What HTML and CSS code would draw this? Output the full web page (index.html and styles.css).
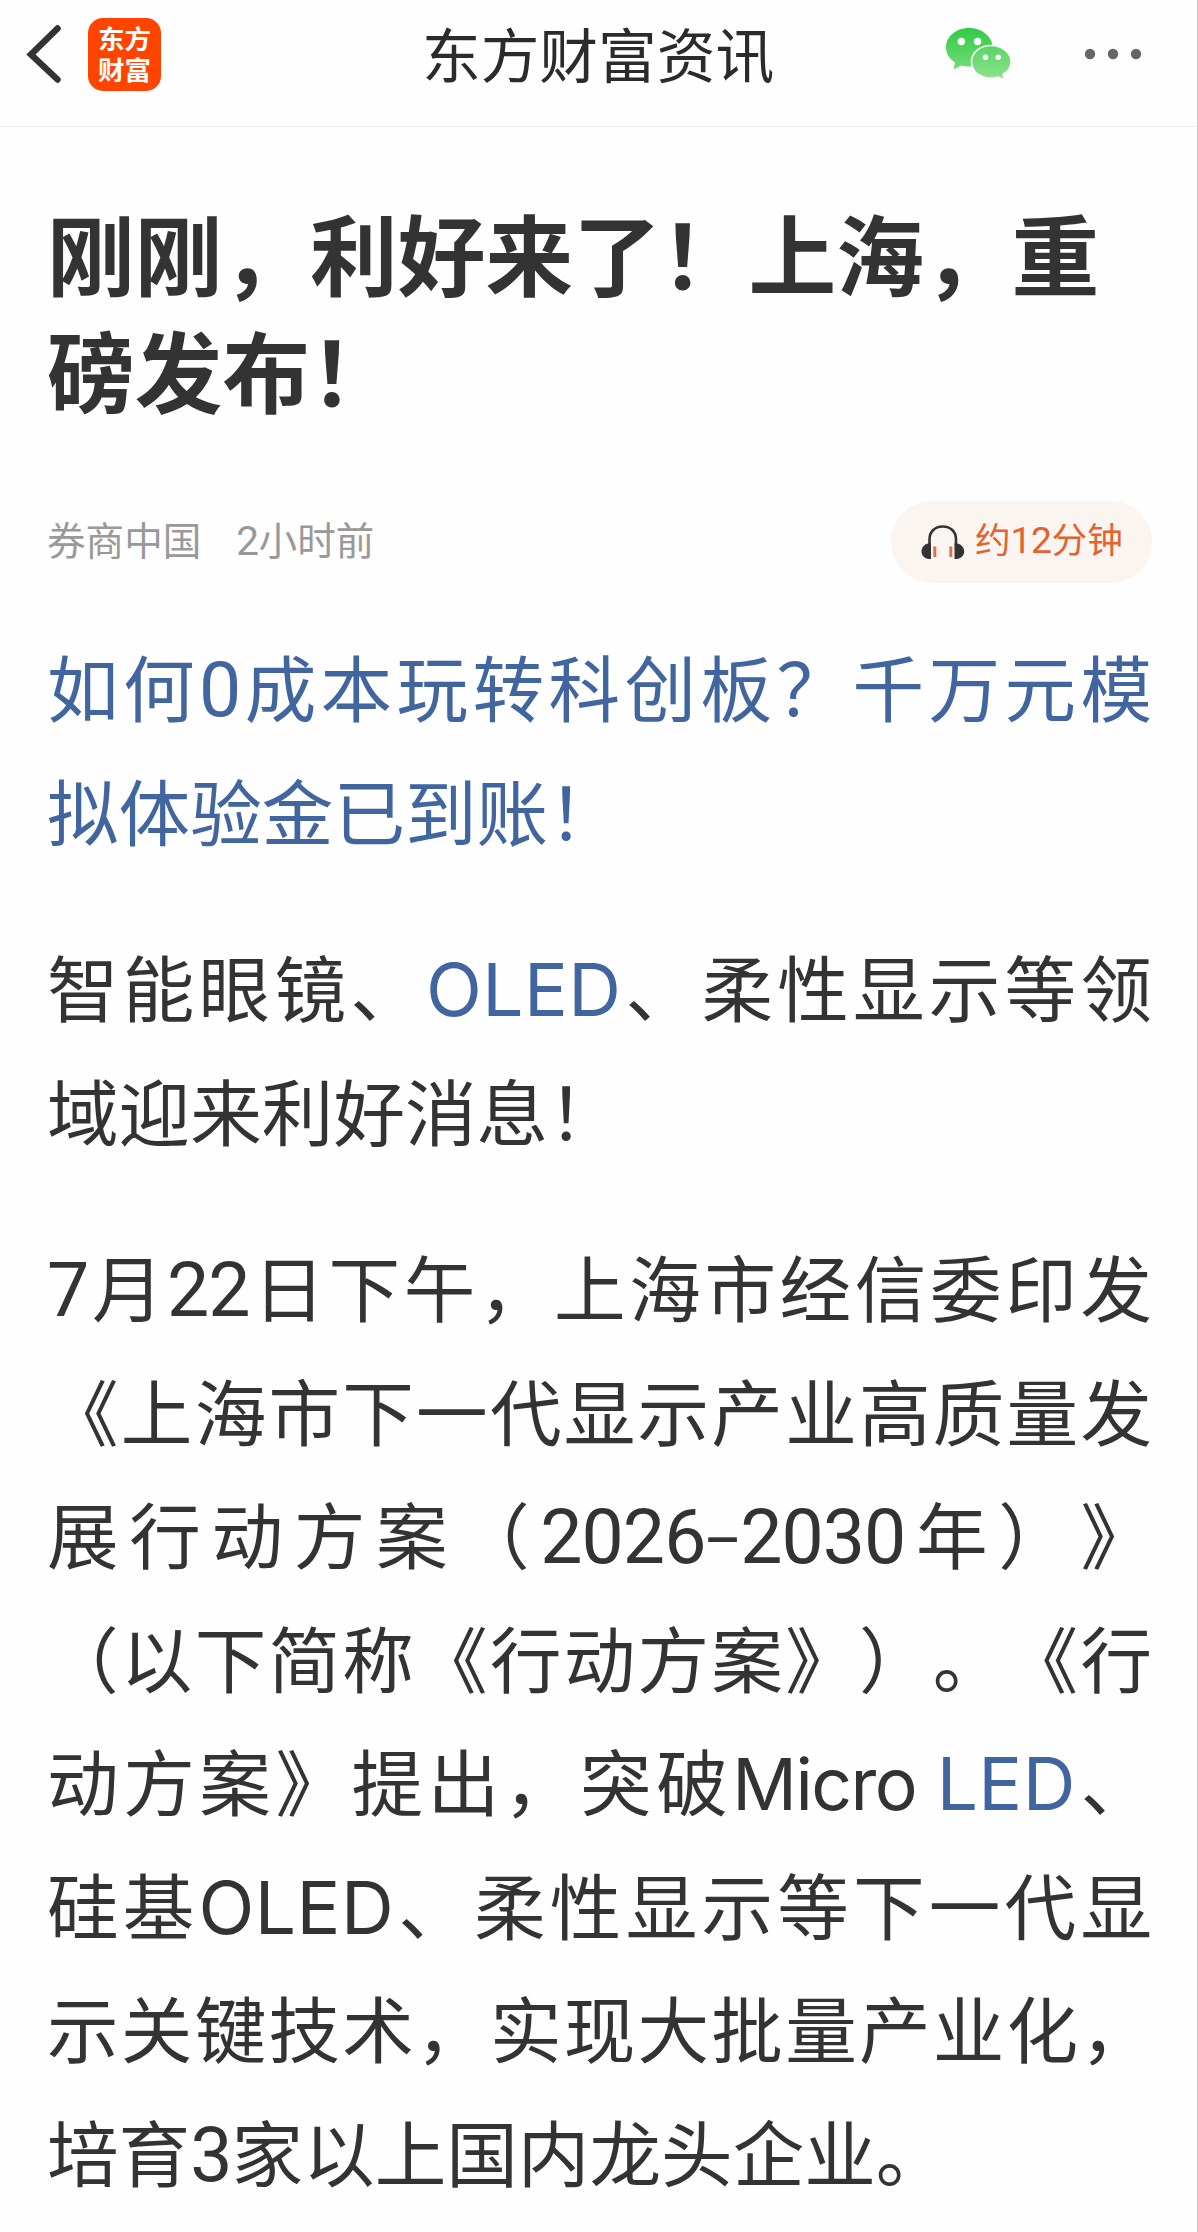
FILE: index.html
```html
<!DOCTYPE html>
<html lang="zh-CN">
<head>
<meta charset="utf-8">
<title>东方财富资讯</title>
<link rel="stylesheet" href="styles.css">
</head>
<body>
<div class="page">
  <header class="topbar">
    <div class="side">
      <svg class="back" width="36" height="60" viewBox="0 0 36 60"><path d="M31.500 3.500L5 29.500L31.500 54.500" fill="none" stroke="#333" stroke-width="6.500" stroke-linecap="round" stroke-linejoin="miter"/></svg>
      <div class="logo">东方<br>财富</div>
    </div>
    <div class="name">东方财富资讯</div>
    <div class="side side-end">
      <svg class="wechat" width="68" height="54" viewBox="0 0 68 54">
        <defs>
          <linearGradient id="g1" x1="0" y1="0" x2="0" y2="1"><stop offset="0" stop-color="#30cb45"/><stop offset="1" stop-color="#72dd78"/></linearGradient>
          <linearGradient id="g2" x1="0" y1="0" x2="0" y2="1"><stop offset="0" stop-color="#5bd466"/><stop offset="1" stop-color="#8be48e"/></linearGradient>
        </defs>
        <path d="M24 1C11 1 1 9.500 1 20.500C1 27 4.500 32 10 35.500L8.500 42.500L16.500 38.500C19 39.300 21.500 39.500 24 39.500C37 39.500 47.500 31 47.500 20.500C47.500 9.500 37 1 24 1Z" fill="url(#g1)"/>
        <path d="M46 18.500C35 18.500 26.500 25.500 26.500 35C26.500 44.500 35 51 46 51C48.500 51 51 50.700 53 50L59.500 53L58 47.500C63 44.500 66 40 66 35C66 25.500 57 18.500 46 18.500Z" fill="url(#g2)" stroke="#fefefe" stroke-width="1.600"/>
        <g fill="#fefefe"><circle cx="16.300" cy="14.500" r="3.700"/><circle cx="32.600" cy="14.500" r="3.700"/><circle cx="40.500" cy="30.300" r="2.700"/><circle cx="53.200" cy="30.300" r="2.700"/></g>
      </svg>
      <svg class="more" width="58" height="12" viewBox="0 0 58 12" fill="#666"><circle cx="6" cy="6" r="5.200"/><circle cx="29" cy="6" r="5.200"/><circle cx="52" cy="6" r="5.200"/></svg>
    </div>
  </header>
  <article class="article">
    <h1 class="headline">刚刚，利好来了！上海，重<br>磅发布！</h1>
    <div class="meta">
      <div class="source"><span>券商中国</span><span><b class="num">2</b>小时前</span></div>
      <div class="listen">
        <svg width="44" height="36" viewBox="0 0 44 36">
          <path d="M8.500 22V15.500C8.500 7.500 14 2.500 21.700 2.500C29.500 2.500 35 7.500 35 15.500V22" fill="none" stroke="#333" stroke-width="2.600"/>
          <path d="M10 19.500V35H8C3.500 34.500 .5 31.500 .5 27.500C.5 23.500 3 20.500 7 19.500ZM33.500 19.500V35H35.500C40 34.500 43.200 31.500 43.200 27.500C43.200 23.500 40.500 20.500 36.500 19.500Z" fill="#333"/>
          <path d="M13.800 22.500V33M29.800 22.500V33" stroke="#e3703f" stroke-width="3"/>
        </svg>
        <span class="duration">约<b class="num">12</b>分钟</span>
      </div>
    </div>
    <p class="para link"><span class="line">如何<b class="num">0</b>成本玩转科创板？千万元模</span><span class="line last">拟体验金已到账！</span></p>
    <p class="para"><span class="line">智能眼镜、<a class="link latin">OLED</a>、柔性显示等领</span><span class="line last">域迎来利好消息！</span></p>
    <p class="para"><span class="line"><b class="num">7</b>月<b class="num">22</b>日下午，上海市经信委印发</span><span class="line">《上海市下一代显示产业高质量发</span><span class="line">展行动方案（<b class="num">2026<i class="dash">-</i>2030</b>年）》</span><span class="line">（以下简称《行动方案》）。《行</span><span class="line">动方案》提出，突破<b class="latin micro">Micro</b> <a class="link latin">LED</a>、</span><span class="line">硅基<b class="latin">OLED</b>、柔性显示等下一代显</span><span class="line">示关键技术，实现大批量产业化，</span><span class="line last">培育<b class="num">3</b>家以上国内龙头企业。</span></p>
  </article>
</div>
</body>
</html>
```
FILE: styles.css
```css
* { box-sizing: border-box; }
body {
  margin: 0;
  background: #fefefe;
  color: #333;
  font-family: "Noto Sans CJK SC", sans-serif;
  text-spacing-trim: space-all;
}
b, i { font-weight: inherit; font-style: normal; }
svg { display: block; flex: none; }
.page {
  min-height: 2232px;
  border-right: 1px solid #ccc;
  overflow: hidden;
}
.topbar {
  display: grid;
  grid-template-columns: 396px auto 1fr;
  align-items: center;
  height: 127px;
  padding: 0 55px 18px 26px;
  border-bottom: 1px solid #eee;
}
.side { display: flex; align-items: center; gap: 26px; }
.side-end { justify-content: flex-end; gap: 71px; }
.back { margin-top: 1px; }
.logo {
  width: 73px;
  height: 73px;
  padding-top: 4px;
  border-radius: 15px;
  background: #ff4400;
  color: #fff;
  font-size: 26.5px;
  font-weight: 700;
  line-height: 31px;
  text-align: center;
}
.name { padding-bottom: 3px; font-size: 58.7px; line-height: 80px; color: #2b2b2b; }
.article { padding: 65px 45px 0 47px; }
.headline {
  margin: 0;
  font-size: 87.7px;
  line-height: 117px;
  font-weight: 700;
  white-space: nowrap;
}
.meta {
  display: flex;
  justify-content: space-between;
  align-items: center;
  height: 82px;
  margin-top: 75px;
}
.source { display: flex; gap: 35px; padding-bottom: 9px; font-size: 38.6px; line-height: 50px; color: #999; }
.listen {
  display: flex;
  align-items: center;
  gap: 10px;
  width: 261px;
  height: 82px;
  padding-left: 30px;
  border-radius: 41px;
  background: #fbf5f1;
  color: #e4622d;
  font-size: 35.600px;
  line-height: 50px;
  white-space: nowrap;
}
.duration { padding-bottom: 8px; }
.num { font-family: Roboto, sans-serif; font-size: 1.05em; letter-spacing: -.013em; line-height: 1; }
.dash { display: inline-block; margin: 0 8px 0 7px; transform: scale(1.6, .85); line-height: 1; }
.latin { font-family: Inter, sans-serif; font-size: 1.02em; letter-spacing: .006em; line-height: 1; }
.micro { font-size: 1em; letter-spacing: -.022em; }
.para { margin: 41px 0 0; font-size: 71.6px; line-height: 123.5px; }
.para + .para { margin-top: 53px; }
.link { color: #40659f; }
.line { display: block; height: 123.5px; text-align: justify; text-align-last: justify; white-space: nowrap; }
.last { text-align-last: left; }
```
